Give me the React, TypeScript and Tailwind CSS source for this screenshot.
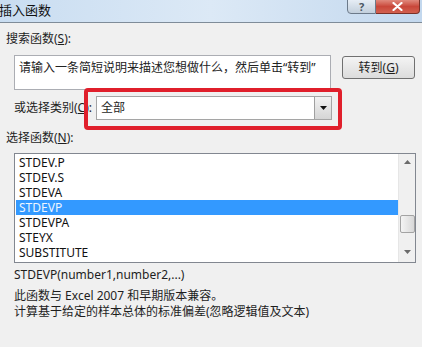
const functions = ['STDEV.P', 'STDEV.S', 'STDEVA', 'STDEVP', 'STDEVPA', 'STEYX', 'SUBSTITUTE'];

const font = { fontFamily: '"Noto Sans", "Noto Sans CJK SC", sans-serif' };

const App = () => {
  const selected = 'STDEVP';

  return (
    <div
      className="relative w-[422px] h-[347px] overflow-hidden bg-[#f0f0f0] text-[12px] text-[#1e1e1e]"
      style={font}
    >
      {/* Title bar */}
      <div className="relative h-[23px] bg-gradient-to-r from-[#c9ddf1] via-[#dce9f6] to-[#c3d8ee] border-b border-[#7f8c99]">
        <span className="absolute left-[-1px] top-[2px] text-[13px] leading-4 text-[#111]">插入函数</span>
        <div className="absolute left-[347px] top-[-1px] flex">
          <div className="w-[29px] h-[15px] rounded-bl-[4px] border border-[#6c7a8a] bg-gradient-to-b from-[#e6edf5] to-[#c2cfdc] flex items-center justify-center text-[11px] leading-none font-bold text-[#4a5663]">
            ?
          </div>
          <div className="w-[44px] h-[15px] rounded-br-[4px] border border-l-0 border-[#7a3128] bg-gradient-to-b from-[#e0897d] via-[#c9473a] to-[#d2604f] flex items-center justify-center">
            <svg width="11" height="9" viewBox="0 0 11 9">
              <path d="M1.5 1 L9.5 8 M9.5 1 L1.5 8" stroke="#fff" strokeWidth="2.2" strokeLinecap="round" />
            </svg>
          </div>
        </div>
      </div>

      <div className="flex flex-col">
        {/* Search */}
        <div className="mt-[8px] ml-[6px] h-4 leading-4">
          搜索函数(<span className="underline">S</span>):
        </div>
        <div className="mt-[8px] ml-[14px] flex items-start">
          <div className="w-[317px] h-[35px] bg-white border border-[#abadb3] pl-[4px] pt-[4px] leading-4 text-[#222]">
            请输入一条简短说明来描述您想做什么，然后单击“转到”
          </div>
          <button className="ml-[11px] mt-[1px] w-[73px] h-[23px] rounded-[3px] border border-[#707070] bg-gradient-to-b from-[#f4f4f4] to-[#dcdcdc] leading-4 text-[#1e1e1e]">
            转到(<span className="underline">G</span>)
          </button>
        </div>

        {/* Category */}
        <div className="mt-[6px] ml-[14px] flex items-center h-[24px]">
          <span className="w-[82px] leading-4">
            或选择类别(<span className="underline">C</span>):
          </span>
          <div className="w-[236px] h-[24px] bg-white border border-[#a5a5a5] flex items-center justify-between">
            <span className="pl-[4px] leading-4">全部</span>
            <div className="w-[17px] h-[22px] border-l border-[#a0a0a0] bg-gradient-to-b from-[#f2f2f2] to-[#d5d5d5] flex items-center justify-center">
              <svg width="7" height="4" viewBox="0 0 7 4">
                <path d="M0 0 H7 L3.5 4 Z" fill="#111" />
              </svg>
            </div>
          </div>
        </div>

        {/* Function list */}
        <div className="mt-[10px] ml-[6px] h-4 leading-4">
          选择函数(<span className="underline">N</span>):
        </div>
        <div className="mt-[7px] ml-[14px] w-[402px] h-[110px] bg-white border border-[#828790] flex">
          <div className="flex-1 pt-[1px]">
            {functions.map((fn) => (
              <div
                key={fn}
                className={
                  fn === selected
                    ? 'ml-[1px] h-[15px] leading-[15px] pl-[3px] text-[12px] bg-[#3399ff] text-[#eef6ff]'
                    : 'ml-[1px] h-[15px] leading-[15px] pl-[3px] text-[12px] text-[#111]'
                }
              >
                {fn}
              </div>
            ))}
          </div>
          <div className="w-[17px] bg-[#f0f0f0] border-l border-[#e6e6e6] flex flex-col items-center">
            <svg className="mt-[6px]" width="7" height="4" viewBox="0 0 7 4">
              <path d="M3.5 0 L7 4 H0 Z" fill="#6b6b6b" />
            </svg>
            <div className="mt-[51px] w-[15px] h-[18px] rounded-[2px] border border-[#a3a3a3] bg-gradient-to-r from-[#f4f4f4] to-[#d8d8d8]" />
            <svg className="mt-[17px]" width="7" height="4" viewBox="0 0 7 4">
              <path d="M0 0 H7 L3.5 4 Z" fill="#6b6b6b" />
            </svg>
          </div>
        </div>

        {/* Description */}
        <div className="mt-[4px] ml-[14px] h-4 leading-4">STDEVP(number1,number2,...)</div>
        <div className="mt-[5px] ml-[14px] leading-4">
          <div>此函数与 Excel 2007 和早期版本兼容。</div>
          <div>计算基于给定的样本总体的标准偏差(忽略逻辑值及文本)</div>
        </div>
      </div>

      {/* Red highlight */}
      <div className="absolute left-[84px] top-[88px] w-[258px] h-[42px] rounded-[4px] border-[4px] border-[#e01f2b]" />
    </div>
  );
};

export default App;
